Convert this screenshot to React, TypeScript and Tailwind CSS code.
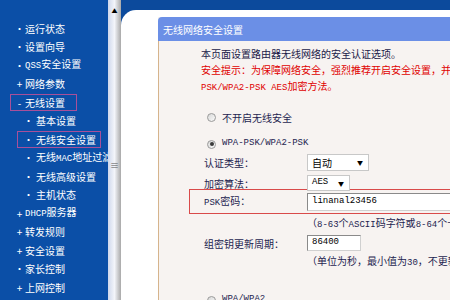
const cjk = "font-['Noto_Sans_CJK_SC','Noto_Sans',sans-serif]"

const M = ({ children }: { children: any }) => (
  <span className="font-['Liberation_Mono',monospace] text-[9px]">{children}</span>
)

type NavItem = { mark: string; text: any; sub?: boolean; boxed?: number }

const navItems: NavItem[] = [
  { mark: '•', text: '运行状态' },
  { mark: '•', text: '设置向导' },
  { mark: '•', text: <><M>QSS</M>安全设置</> },
  { mark: '+', text: '网络参数' },
  { mark: '-', text: '无线设置', boxed: 67 },
  { mark: '•', text: '基本设置', sub: true },
  { mark: '•', text: '无线安全设置', sub: true, boxed: 84 },
  { mark: '•', text: <>无线<M>MAC</M>地址过滤</>, sub: true },
  { mark: '•', text: '无线高级设置', sub: true },
  { mark: '•', text: '主机状态', sub: true },
  { mark: '+', text: <><M>DHCP</M>服务器</> },
  { mark: '+', text: '转发规则' },
  { mark: '+', text: '安全设置' },
  { mark: '•', text: '家长控制' },
  { mark: '+', text: '上网控制' },
]

const Radio = ({ checked }: { checked?: boolean }) => (
  <span className="flex h-[9px] w-[9px] items-center justify-center rounded-full border border-[#9a9a9a] bg-gradient-to-br from-[#d8d8d8] to-[#fafafa]">
    {checked && <span className="h-[4px] w-[4px] rounded-full bg-[#3a3a3a]" />}
  </span>
)

const Label = ({ children }: { children: any }) => (
  <div className="w-[103px] shrink-0 text-[#1e1e50]">{children}</div>
)

const App = () => {
  return (
    <div className={'flex h-[300px] w-[450px] overflow-hidden text-[10px] ' + cjk}>
      {/* left menu */}
      <div className="w-[108px] shrink-0 overflow-hidden whitespace-nowrap bg-[#0b4fa7] pt-[19px] text-white">
        {navItems.map((it, i) => (
          <div key={i} className={'flex h-[18.5px] items-center ' + (it.sub ? 'pl-[17px]' : 'pl-[10px]')}>
            <span
              className={
                'flex h-[17px] items-center px-[3px] border ' +
                (it.boxed ? 'border-[#a8509a]' : 'border-transparent')
              }
              style={it.boxed ? { width: it.boxed } : undefined}
            >
              <span className={(it.sub ? 'w-[15px]' : 'w-[11px]') + ' shrink-0 text-center'}>{it.mark}</span>
              <span className="leading-[17px]">{it.text}</span>
            </span>
          </div>
        ))}
      </div>

      {/* scrollbar */}
      <div className="flex w-[13px] shrink-0 flex-col bg-gradient-to-r from-[#cfd8ec] via-[#f3f5fa] to-[#a9a9a9]">
        <div className="flex h-[22px] items-center justify-center text-[6px] leading-none text-black">▲</div>
        <div className="flex flex-1 items-start justify-center pt-[139px] text-[9px] leading-none text-[#555]">≡</div>
      </div>

      {/* content */}
      <div className="flex-1 bg-[#0c4a9c] pt-[10px]">
        <div className="h-full rounded-tl-[15px] bg-white pl-[37px] pt-[7px]">
          <div className="h-full bg-[#f7f3f1]">
            <div className="flex h-[24px] items-center rounded-tl-[4px] bg-[#6b8fe6] pl-[5px] text-white">
              无线网络安全设置
            </div>
            <div className="h-full border-l border-[#d6b48c] pt-[5px]">
              <div className="whitespace-nowrap pl-[42px] leading-[16px]">
                <div className="text-[#1a1a48]">本页面设置路由器无线网络的安全认证选项。</div>
                <div className="text-[#e00000]">安全提示：为保障网络安全，强烈推荐开启安全设置，并使用WPA-</div>
                <div className="text-[#e00000]">
                  <M>PSK/WPA2-PSK AES</M>加密方法。
                </div>
              </div>

              <div className="mt-[13px] flex h-[16px] items-center gap-[6px] pl-[48px] text-[#1e1e50]">
                <Radio />
                <span>不开启无线安全</span>
              </div>

              <div className="mt-[11px] flex h-[16px] items-center gap-[6px] pl-[48px] text-[#1e1e50]">
                <Radio checked />
                <M>WPA-PSK/WPA2-PSK</M>
              </div>

              <div className="mt-[2px] flex h-[17px] items-center pl-[45px]">
                <Label>认证类型：</Label>
                <div className="flex h-[17px] w-[62px] items-center justify-between border border-[#c8c8c8] bg-white pl-[4px] pr-[5px] text-black">
                  <span>自动</span>
                  <span className="text-[6px]">▼</span>
                </div>
              </div>

              <div className="mt-[4px] flex h-[16px] items-center pl-[45px]">
                <Label>加密算法：</Label>
                <div className="flex h-[16px] w-[43px] items-center justify-between border border-[#c8c8c8] bg-white pl-[4px] pr-[5px] text-black">
                  <M>AES</M>
                  <span className="text-[6px]">▼</span>
                </div>
              </div>

              <div className="ml-[30px] mt-[-2px] flex h-[25px] w-[400px] items-center border border-[#d94a4a] pl-[14px]">
                <Label>
                  <M>PSK</M>密码：
                </Label>
                <div className="flex h-[18px] flex-1 items-center border border-[#8a8a8a] border-b-[#d0d0d0] border-r-[#d0d0d0] bg-white pl-[4px] text-black">
                  <M>linanal23456</M>
                </div>
              </div>

              <div className="h-[18px] whitespace-nowrap pl-[148px] leading-[18px] text-[#1e1e50]">
                （<M>8-63</M>个<M>ASCII</M>码字符或<M>8-64</M>个十六进制字符）
              </div>

              <div className="mt-[3px] flex h-[16px] items-center pl-[45px]">
                <Label>组密钥更新周期：</Label>
                <div className="flex h-[16px] w-[54px] items-center border border-[#8a8a8a] border-b-[#d0d0d0] border-r-[#d0d0d0] bg-white pl-[4px] text-black">
                  <M>86400</M>
                </div>
              </div>

              <div className="h-[19px] whitespace-nowrap pl-[148px] leading-[19px] text-[#1e1e50]">
                （单位为秒，最小值为<M>30</M>，不更新则为<M>0</M>）
              </div>

              <div className="mt-[22px] flex h-[16px] items-center gap-[6px] pl-[48px] text-[#1e1e50]">
                <Radio />
                <M>WPA/WPA2</M>
              </div>
            </div>
          </div>
        </div>
      </div>
    </div>
  )
}

export default App
